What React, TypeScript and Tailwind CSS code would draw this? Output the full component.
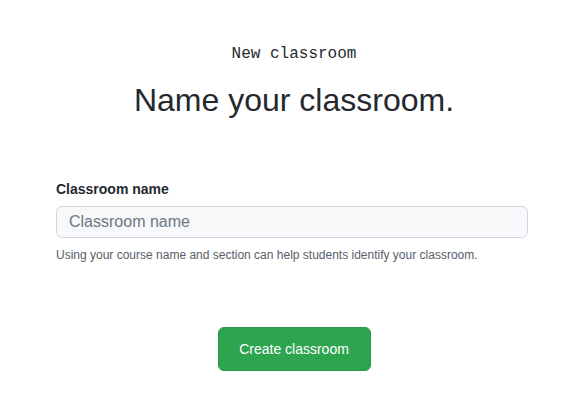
const App = () => {
  return (
    <div className="min-h-screen bg-white font-['Liberation_Sans',Arial,sans-serif] text-[#24292f]">
      <div className="w-[472px] mx-auto pt-[44px]">
        <div className="text-center pl-[4px]">
          <p className="font-['Liberation_Mono',monospace] text-base leading-5">New classroom</p>
          <h1 className="mt-[16px] text-[32px] leading-[40px] font-normal">Name your classroom.</h1>
        </div>

        <form className="mt-[59px]" onSubmit={(e) => e.preventDefault()}>
          <label htmlFor="name" className="block text-sm font-bold leading-5">
            Classroom name
          </label>
          <input
            id="name"
            type="text"
            placeholder="Classroom name"
            className="mt-[7px] w-full h-8 px-3 rounded-md border border-[#d0d7de] bg-[#f6f8fa] text-base placeholder:text-[#6e7781] outline-none"
          />
          <p className="mt-[9px] text-xs leading-4 text-[#57606a]">
            Using your course name and section can help students identify your classroom.
          </p>

          <div className="flex justify-center mt-[64px] pl-[4px]">
            <button
              type="submit"
              className="w-[153px] h-[44px] rounded-md border border-[#2c974b] bg-[#2da44e] text-white text-sm"
            >
              Create classroom
            </button>
          </div>
        </form>
      </div>
    </div>
  );
};

export default App;
